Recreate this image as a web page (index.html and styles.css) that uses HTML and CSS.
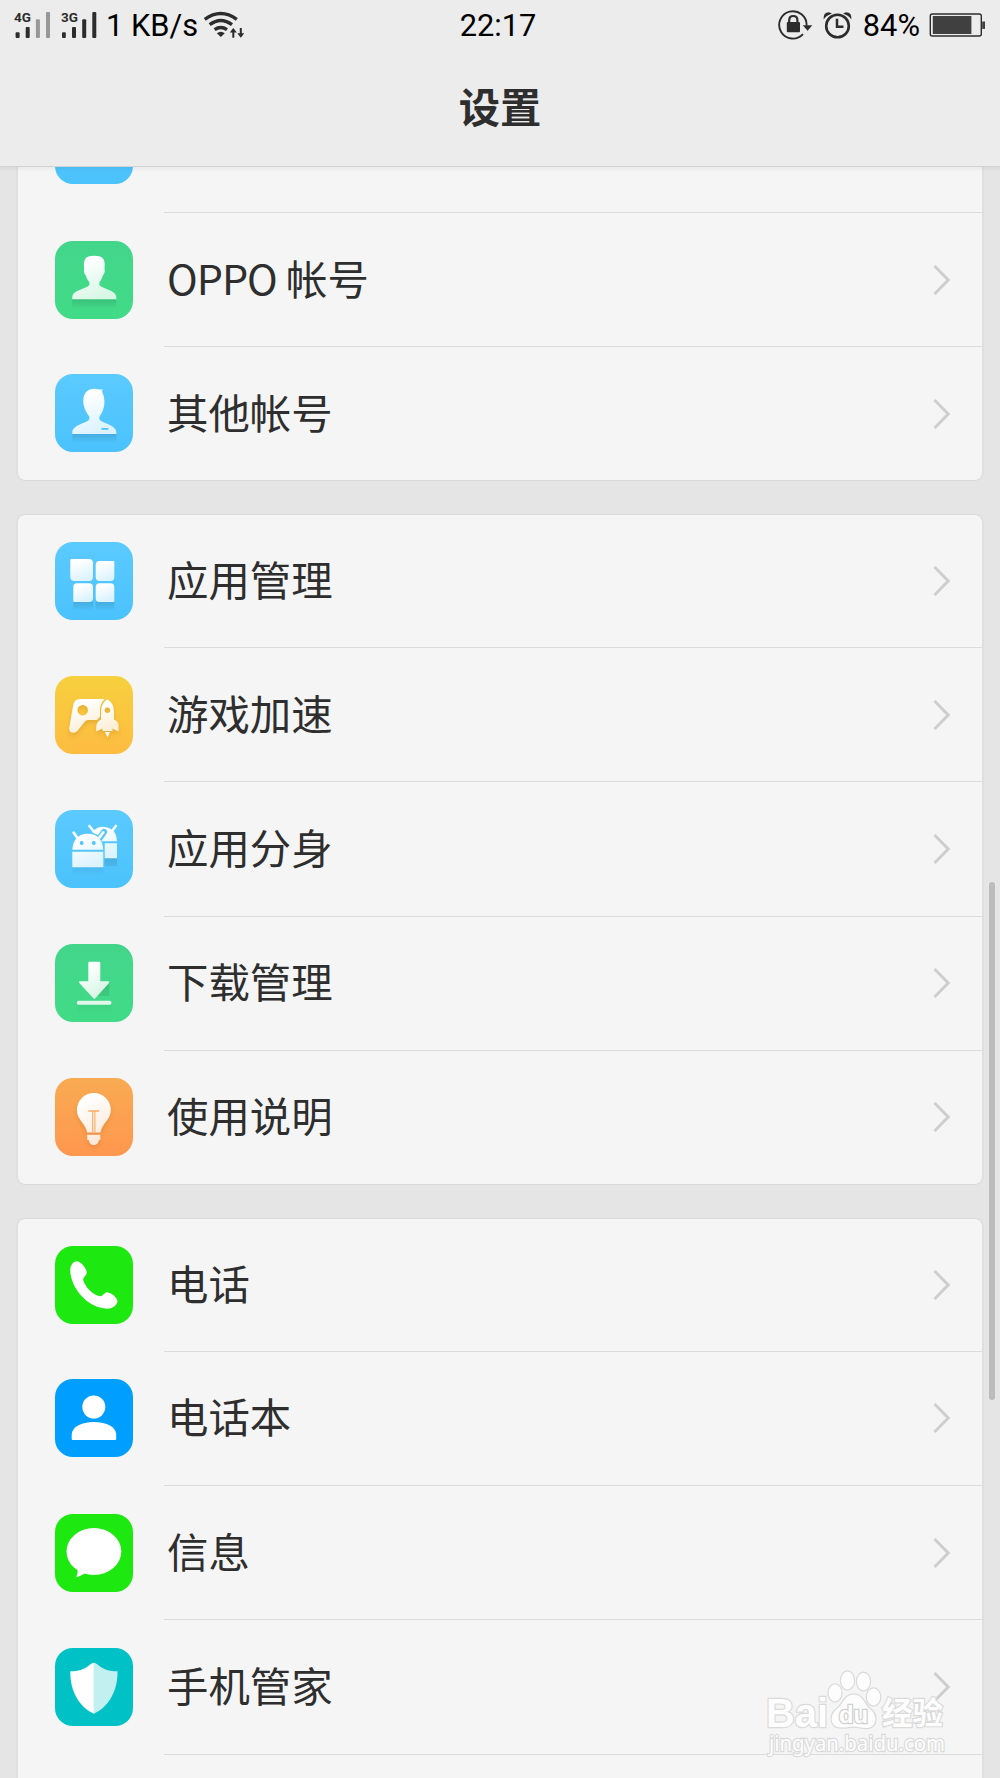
FILE: index.html
```html
<!DOCTYPE html>
<html lang="zh-CN">
<head>
  <meta charset="UTF-8">
  <meta name="viewport" content="width=device-width, initial-scale=1.0">
  <title>设置</title>
  <link rel="stylesheet" href="styles.css">
</head>
<body>
  <!-- Shared gradients and the row arrow -->
  <svg class="defs" width="0" height="0">
    <defs>
      <linearGradient id="glyph" x1="0" y1="0" x2="0.4" y2="1">
        <stop offset="0.2" stop-color="#fff"/>
        <stop offset="1" stop-color="#fff" stop-opacity="0.8"/>
      </linearGradient>
      <linearGradient id="drop" x1="0" y1="0" x2="0" y2="1">
        <stop offset="0" stop-color="#000" stop-opacity="0.12"/>
        <stop offset="1" stop-color="#000" stop-opacity="0"/>
      </linearGradient>
      <symbol id="arrow" viewBox="0 0 18 32">
        <path d="M1.5 2L15.2 16L1.5 30" fill="none" stroke="#cecece" stroke-width="3"/>
      </symbol>
    </defs>
  </svg>

  <header class="header">
    <div class="status">
      <div class="status-left">
        <svg class="signal" width="86" height="30" viewBox="14 10 86 30">
          <g class="net"><text x="14" y="22">4G</text><text x="61" y="22">3G</text></g>
          <g fill="#2c2c2c">
            <rect x="15.6" y="32.3" width="4" height="5.6" rx="1"/>
            <rect x="25.7" y="27" width="4" height="10.9" rx="1"/>
            <rect x="62" y="32.3" width="3.8" height="5.6" rx="1"/>
            <rect x="72" y="27" width="4" height="10.9" rx="1"/>
            <rect x="82.2" y="19.3" width="4" height="18.6" rx="1"/>
            <rect x="92.3" y="12" width="4" height="25.9" rx="1"/>
          </g>
          <g fill="#979797">
            <rect x="35.9" y="19.3" width="4" height="18.6" rx="1"/>
            <rect x="46" y="12" width="4" height="25.9" rx="1"/>
          </g>
        </svg>
        <span class="speed">1 KB/s</span>
        <svg class="wifi" width="42" height="30" viewBox="204 10 42 30">
          <g fill="none" stroke="#2c2c2c" stroke-width="3.4">
            <path d="M205.8 19.3Q221.8 7.8 237.8 19.3"/>
            <path d="M210.7 24.7Q221.8 16.2 233 24.7"/>
            <path d="M215.6 29.6Q221.8 25.3 228 29.6"/>
          </g>
          <path d="M217.8 33.2Q221.8 30.2 225.8 33.2L221.8 37Z" fill="#2c2c2c"/>
          <path d="M234.3 37.7V29.5M241.8 28V36" stroke="#2c2c2c" stroke-width="2" fill="none"/>
          <path d="M230.8 32.5L234.3 28L237.8 32.5ZM238.3 33.3L241.8 37.8L245.3 33.3Z" fill="#2c2c2c"/>
        </svg>
      </div>
      <span class="clock">22:17</span>
      <div class="status-right">
        <svg class="rotate" width="35" height="32" viewBox="778 9 35 32">
          <path d="M803 34.2A13.7 13.7 0 1 1 806.6 25.5" fill="none" stroke="#2c2c2c" stroke-width="1.9"/>
          <path d="M802.8 25.3H812.3L807.6 30.8Z" fill="#2c2c2c"/>
          <path d="M789.2 23.5V20.2Q789.2 16 793.3 16Q797.4 16 797.4 20.2V23.5" fill="none" stroke="#2c2c2c" stroke-width="2.2"/>
          <rect x="786.8" y="22" width="13.2" height="10.3" rx="1" fill="#2c2c2c"/>
        </svg>
        <svg class="alarm" width="30" height="32" viewBox="823 9 30 32">
          <circle cx="837.5" cy="26" r="11.3" fill="none" stroke="#2c2c2c" stroke-width="2.6"/>
          <path d="M837 18.7V26.7H843.5" fill="none" stroke="#2c2c2c" stroke-width="2.5"/>
          <path d="M823.6 19.5Q823 12.4 829 12.3L832 13.4Q826 15.5 823.6 19.5ZM851.4 19.5Q852 12.4 846 12.3L843 13.4Q849 15.5 851.4 19.5Z" fill="#2c2c2c"/>
        </svg>
        <span class="percent">84%</span>
        <svg class="battery" width="56" height="26" viewBox="929 12 56 26">
          <rect x="930.3" y="14" width="51" height="22" rx="2" fill="none" stroke="#2c2c2c" stroke-width="1.4"/>
          <rect x="932.8" y="16" width="38.6" height="18" fill="#404040"/>
          <rect x="982.2" y="21.5" width="2.8" height="7.4" fill="#404040"/>
        </svg>
      </div>
    </div>
    <h1 class="title">设置</h1>
  </header>

  <main class="list">
    <section class="card card-cut">
      <div class="row">
        <div class="icon sky"></div>
        <div class="row-body"></div>
      </div>
      <div class="row">
        <div class="icon green">
          <svg viewBox="0 0 78 78">
            <rect x="17.3" y="58.3" width="44" height="10" fill="url(#drop)"/>
            <path fill="url(#glyph)" d="M17.3 58.3V56C17.5 51 24 49.3 29.5 47C34 45.2 35 44 34.2 41C32.5 39 31.5 37.5 31 34.8C29.2 33 28.3 29.5 29.2 28C28.2 19 29.5 14.7 39.3 14.7C49 14.7 50.5 19 49.5 28C50.3 29.5 49.5 33 47.7 34.8C47.2 37.5 46.2 39 44.6 41C43.8 44 44.6 45.2 49.1 47C54.6 49.3 61 51 61.3 56V58.3Z"/>
          </svg>
        </div>
        <div class="row-body"><span><span class="latin">OPPO</span> 帐号</span><svg class="arrow"><use href="#arrow"/></svg></div>
      </div>
      <div class="row">
        <div class="icon sky">
          <svg viewBox="0 0 78 78">
            <rect x="17.3" y="60" width="44" height="9" fill="url(#drop)"/>
            <path fill="url(#glyph)" d="M17.3 60V58C17.5 53 24 50.8 29.5 48.5C34 46.5 35 45.5 34.2 42.5C31 38 28.3 33 28.3 27C28.3 18.5 33 14.7 39.5 14.7C42.5 14.7 45.5 16.2 47.7 15.3C46.8 17.2 47 18.2 48 20C51.5 29 48 38 44.6 42.5C43.8 45.5 44.6 46.5 49.1 48.5C54.6 50.8 61 53 61.3 58V60Z"/>
            <rect x="46.3" y="53.9" width="7.2" height="1.9" rx="0.9" fill="#4fc2fb"/>
          </svg>
        </div>
        <div class="row-body"><span>其他帐号</span><svg class="arrow"><use href="#arrow"/></svg></div>
      </div>
    </section>

    <section class="card">
      <div class="row">
        <div class="icon sky">
          <svg viewBox="0 0 78 78">
            <path fill="url(#drop)" d="M18.3 60H38V69H18.3ZM40.7 60H59.3V69H40.7Z"/>
            <g fill="url(#glyph)">
              <path d="M16.5 17H34Q38 17 38 21V35Q38 39 34 39H19.5Q15.3 39 15.3 35V18.2Q15.3 17 16.5 17Z"/>
              <path d="M44.5 19H58.3Q59.3 19 59.3 20V35Q59.3 39 55.5 39H44.5Q40.7 39 40.7 35V23Q40.7 19 44.5 19Z"/>
              <path d="M22 41.3H34Q38 41.3 38 45V56Q38 60 34 60H19.3Q18.3 60 18.3 59V45Q18.3 41.3 22 41.3Z"/>
              <path d="M44.5 41.3H55.5Q59.3 41.3 59.3 45V59Q59.3 60 58.3 60H44.5Q40.7 60 40.7 56V45Q40.7 41.3 44.5 41.3Z"/>
            </g>
          </svg>
        </div>
        <div class="row-body"><span>应用管理</span><svg class="arrow"><use href="#arrow"/></svg></div>
      </div>
      <div class="row">
        <div class="icon yellow">
          <svg viewBox="0 0 78 78">
            <g class="lifted" fill="url(#glyph)">
              <path fill-rule="evenodd" d="M25 23H49.5Q45.2 28 45 34V41Q42.5 42.5 42.2 44H33Q31 44 29.7 45.7L22.5 54.8C19 58.5 13.5 57 14.2 52L18.2 29Q19.4 23 25 23ZM27.7 29A5.2 5.2 0 1 0 27.71 29Z"/>
              <path fill-rule="evenodd" d="M52.3 23.3Q58.7 27 59 35V43.5Q63.8 46 63.5 50V55.5L57.5 52.5V55H47.5V52.5L41.3 55.5V50Q41.5 46 46 43.5V35Q46.3 27 52.3 23.3ZM52.4 31.5A2.8 2.8 0 1 0 52.41 31.5Z"/>
              <path d="M50 56H55L52.5 61.5Z"/>
            </g>
          </svg>
        </div>
        <div class="row-body"><span>游戏加速</span><svg class="arrow"><use href="#arrow"/></svg></div>
      </div>
      <div class="row">
        <div class="icon sky">
          <svg viewBox="0 0 78 78">
            <path fill="url(#drop)" d="M17.3 57.3H48.3V66H17.3ZM49.7 48.3H62V56H49.7Z"/>
            <path d="M34.4 16L38 20.5M60.9 16L58 19.7" stroke="#f2fbff" stroke-width="2.6" stroke-linecap="round"/>
            <path fill="url(#glyph)" d="M37 22Q42 16.7 48 16.7Q61.5 17.5 62 31.3H47L43 25Q39 23.5 37 22ZM49.7 33.3H62V48.3H49.7Z"/>
            <path d="M49 22L44.3 28.5" stroke="#53c5fd" stroke-width="6.2" stroke-linecap="round"/>
            <path d="M18.7 22.7L22.5 28M48.3 22.3L44 28" stroke="#f4fcff" stroke-width="2.8" stroke-linecap="round"/>
            <path fill="url(#glyph)" d="M17.3 39.7Q18.5 24 32.8 23.7Q47.3 24 48.3 39.7ZM17.3 41.7H48.3V57.3H17.3Z"/>
            <circle cx="26.7" cy="33" r="1.9" fill="#4fc3fb"/>
            <circle cx="38.8" cy="33" r="1.9" fill="#4fc3fb"/>
          </svg>
        </div>
        <div class="row-body"><span>应用分身</span><svg class="arrow"><use href="#arrow"/></svg></div>
      </div>
      <div class="row">
        <div class="icon green">
          <svg viewBox="0 0 78 78">
            <path fill="url(#drop)" d="M22 60H56.3V70H22ZM45 38H54.3V52H40Z"/>
            <path fill="url(#glyph)" d="M34.3 17.7H44.3Q45.3 17.7 45.3 18.7V37.3H53.5Q55 37.5 54 39L40.3 54.3Q39.3 55.3 38.3 54.3L24.3 39Q23.3 37.5 24.8 37.3H33.3V18.7Q33.3 17.7 34.3 17.7Z"/>
            <rect x="22" y="56.7" width="34.3" height="4" rx="1.5" fill="#e1f8eb"/>
          </svg>
        </div>
        <div class="row-body"><span>下载管理</span><svg class="arrow"><use href="#arrow"/></svg></div>
      </div>
      <div class="row">
        <div class="icon orange">
          <svg viewBox="0 0 78 78">
            <g class="lifted">
              <path fill="url(#glyph)" d="M38.8 15A17 17 0 0 1 55.8 32C55.8 42 47 45 45.5 54.5H32.2C30.5 45 21.9 42 21.9 32A17 17 0 0 1 38.8 15ZM32.2 56.7H45.3V62H44Q43.2 67 38.8 67Q34.5 67 33.7 62H32.2Z"/>
            </g>
            <path d="M33.3 33H44.2" stroke="#fbab60" stroke-width="1.5"/>
            <path d="M37.7 33V54.5M39.9 33V54.5" stroke="#fbab60" stroke-width="1.1"/>
          </svg>
        </div>
        <div class="row-body"><span>使用说明</span><svg class="arrow"><use href="#arrow"/></svg></div>
      </div>
    </section>

    <section class="card card-last">
      <div class="row">
        <div class="icon lime">
          <svg viewBox="0 0 78 78">
            <path fill="#fff" d="M21.7 15.2C26 15.5 31.5 22 31.8 26.7C31.5 29.5 28 31 28.2 34C30 41 38 49 45 50.2C48 50.3 49 46.5 52 46.2C57 46.7 62.5 52 62.5 55.5C61.5 60 57 62.8 52 62.7C33 62 16 43 15.2 24.5C15.2 19.5 18 15.3 21.7 15.2Z"/>
          </svg>
        </div>
        <div class="row-body"><span>电话</span><svg class="arrow"><use href="#arrow"/></svg></div>
      </div>
      <div class="row">
        <div class="icon blue">
          <svg viewBox="0 0 78 78">
            <circle cx="38.8" cy="28" r="11.5" fill="#fff"/>
            <path fill="#fff" d="M16.7 60V55.5C17 48 26 43 38.9 43C52 43 61 48 61.2 55.5V60Q61.2 61 60.2 61H17.7Q16.7 61 16.7 60Z"/>
          </svg>
        </div>
        <div class="row-body"><span>电话本</span><svg class="arrow"><use href="#arrow"/></svg></div>
      </div>
      <div class="row">
        <div class="icon lime">
          <svg viewBox="0 0 78 78">
            <ellipse cx="38.9" cy="37.5" rx="27.4" ry="23.5" fill="#fff"/>
            <path fill="#fff" d="M22.7 55Q23 59 21.3 63.3Q26 62 30 59.3L33 56Z"/>
          </svg>
        </div>
        <div class="row-body"><span>信息</span><svg class="arrow"><use href="#arrow"/></svg></div>
      </div>
      <div class="row">
        <div class="icon teal">
          <svg viewBox="0 0 78 78">
            <path fill="#fff" d="M38.9 14.7C34 15 33 23 15.3 23.3C15 43 24 59 38.9 65.7Z"/>
            <path fill="#c2efef" d="M38.9 14.7C43.8 15 44.8 23 62.5 23.3C62.8 43 53.8 59 38.9 65.7Z"/>
          </svg>
        </div>
        <div class="row-body"><span>手机管家</span><svg class="arrow"><use href="#arrow"/></svg></div>
      </div>
      <div class="row row-cut"></div>
    </section>
  </main>

  <div class="scrollbar"></div>

  <svg class="watermark" width="184" height="90" viewBox="764 1666 184 90">
    <g class="mark">
      <text class="bai" x="766" y="1726.5" textLength="62" lengthAdjust="spacingAndGlyphs">Bai</text>
      <ellipse cx="835" cy="1693" rx="6.5" ry="8.5"/>
      <ellipse cx="847.5" cy="1680.5" rx="6.5" ry="9"/>
      <ellipse cx="863.5" cy="1681.5" rx="6.5" ry="8.8"/>
      <ellipse cx="873.5" cy="1697" rx="6.7" ry="8.5"/>
      <path d="M853.5 1694.5C863 1694.5 864 1704 870 1709C878 1715 877 1727.5 867 1728C861 1728 857 1726.5 853.5 1726.5C850 1726.5 846 1728 841 1727.5C830 1727.5 829 1715 837 1709C843 1704 845 1694.5 853.5 1694.5Z"/>
      <text class="jingyan" x="882" y="1723.5" textLength="61" lengthAdjust="spacingAndGlyphs">经验</text>
      <text class="url" x="769" y="1750.5" textLength="176" lengthAdjust="spacingAndGlyphs">jingyan.baidu.com</text>
    </g>
    <text class="du" x="839" y="1722.5" textLength="29" lengthAdjust="spacingAndGlyphs">du</text>
  </svg>
</body>
</html>
```
FILE: styles.css
```css
/* Page */
* { box-sizing: border-box; }
body {
  margin: 0;
  width: 1000px;
  height: 1778px;
  overflow: hidden;
  position: relative;
  display: flex;
  flex-direction: column;
  background: #e5e5e5;
  color: #2e2e2e;
  font-family: "Noto Sans CJK SC", sans-serif;
}
.defs { position: absolute; }

/* Status bar and title */
.header {
  position: relative;
  z-index: 1;
  flex: none;
  height: 167px;
  background: #ececec;
  border-bottom: 1px solid #d3d3d3;
  box-shadow: 0 1px 5px rgba(0, 0, 0, 0.08);
}
.status {
  display: grid;
  grid-template-columns: 1fr auto 1fr;
  align-items: center;
  height: 50px;
  padding: 0 15px 0 14px;
  color: #000;
  font-family: Roboto, sans-serif;
  font-size: 30.8px;
  line-height: 48px;
}
.status span { padding-top: 2px; }
.status-left, .status-right {
  display: flex;
  align-items: center;
}
.status-right { justify-content: flex-end; }
.net {
  fill: #2c2c2c;
  font-size: 13.5px;
  font-weight: 700;
}
.speed { margin-left: 6px; }
.wifi { margin-left: 5px; }
.clock { margin-right: 3px; }
.alarm { margin-left: 10px; }
.percent { margin: 0 9px 0 10px; }
.title {
  margin: 25px 0 0;
  text-align: center;
  font-size: 41.3px;
  line-height: 60px;
  font-weight: 700;
}

/* Settings groups */
.list {
  flex: 1;
  min-height: 0;
  overflow: hidden;
  padding: 0 16px;
}
.card {
  margin-bottom: 33px;
  background: #f5f5f5;
  border: 1px solid #dadada;
  border-width: 1px 2px;
  border-color: #dadada #dfdfdf;
  border-radius: 9px;
}
.card-cut { margin-top: -89.3px; }
.card-last {
  margin-bottom: 0;
  border-bottom: 0;
  border-radius: 9px 9px 0 0;
}
.row {
  display: flex;
  align-items: center;
  height: 134.3px;
  padding-left: 37px;
}
.row:first-child, .row:last-child { height: 132.9px; }
.card-cut .row:first-child { height: 134.3px; }
.row.row-cut { height: 23px; }
.row-body {
  flex: 1;
  align-self: stretch;
  display: flex;
  align-items: center;
  justify-content: space-between;
  margin-left: 31px;
  padding: 0 31px 0 3px;
  border-bottom: 1px solid #dbdbdb;
  font-size: 41.4px;
  line-height: 60px;
}
.row-body > span { padding-bottom: 6px; }
.row:last-child .row-body { border-bottom: 0; }
.latin { letter-spacing: -1px; }
.arrow {
  width: 18px;
  height: 32px;
}

/* Icon tiles */
.icon {
  width: 78px;
  height: 78px;
  margin-bottom: 1px;
  border-radius: 18px;
}
.icon svg { display: block; }
.sky { background: linear-gradient(#5bcaff, #4bc2fc); }
.green { background: linear-gradient(#43d68b, #41db87); }
.yellow { background: linear-gradient(#f7d03e, #fdbc41); }
.orange { background: linear-gradient(#f9ab52, #ff974f); }
.lime { background: #1de80f; }
.blue { background: #009fff; }
.teal { background: #00c2c6; }
.lifted { filter: drop-shadow(0 3px 2px rgba(150, 80, 0, 0.22)); }

/* Overlays */
.scrollbar {
  position: absolute;
  z-index: 2;
  right: 5px;
  top: 882px;
  width: 6px;
  height: 518px;
  border-radius: 3px;
  background: #bbb;
}
.watermark {
  position: absolute;
  z-index: 2;
  right: 52px;
  bottom: 22px;
  overflow: visible;
}
.mark {
  fill: #fdfdfd;
  stroke: #dadada;
  stroke-width: 2.4px;
  paint-order: stroke;
}
.bai {
  font-family: "Liberation Sans", sans-serif;
  font-size: 41px;
  font-weight: 700;
}
.du {
  fill: #fdfdfd;
  stroke: #d0d0d0;
  stroke-width: 2.6px;
  paint-order: stroke;
  font-family: "Liberation Sans", sans-serif;
  font-size: 24px;
  font-weight: 700;
}
.jingyan {
  font-size: 31px;
  font-weight: 700;
}
.url {
  font-family: "Noto Sans", sans-serif;
  font-size: 21px;
}
```
